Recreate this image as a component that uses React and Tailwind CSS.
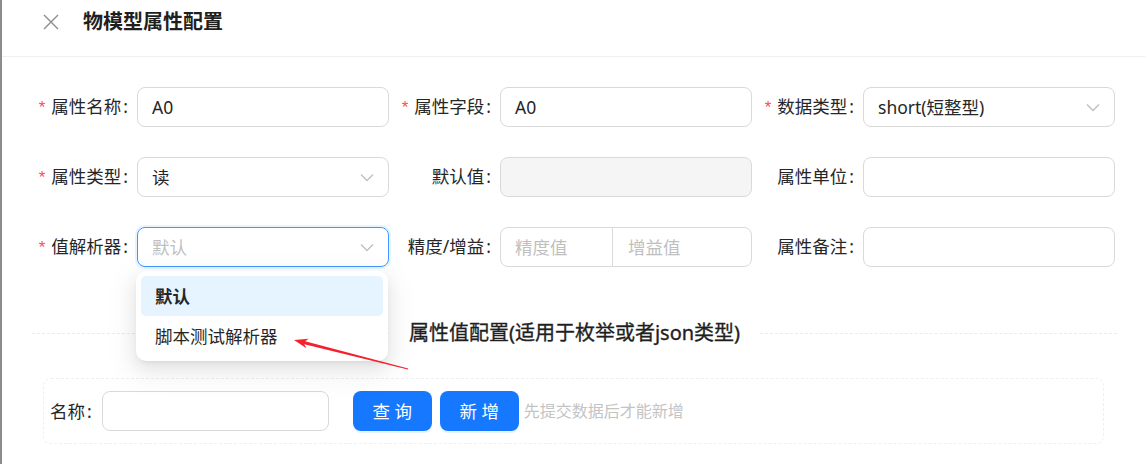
import { useState } from 'react';

const FONT = "font-['Noto_Sans','Noto_Sans_CJK_SC',sans-serif]";

function Chevron() {
  return (
    <svg width="14" height="9" viewBox="0 0 14 9" className="shrink-0">
      <polyline points="1,1.5 7,7.5 13,1.5" fill="none" stroke="#bfbfbf" strokeWidth="1.3" />
    </svg>
  );
}

function Field({ label, required, children }) {
  return (
    <div className="flex w-[363px] items-center">
      <label className="flex w-[111px] shrink-0 items-center justify-end pr-[9px] text-[17.5px] leading-none text-[#262626]">
        {required && <span className="mr-[6px] text-[17px] text-[#ff4d4f] font-['Liberation_Sans',sans-serif]">*</span>}
        {label}
        <span className="ml-[2px]">:</span>
      </label>
      <div className="w-[252px]">{children}</div>
    </div>
  );
}

function TextBox({ value, placeholder, disabled }) {
  return (
    <div
      className={
        'flex h-[40px] items-center rounded-[8px] border px-[14px] text-[17.5px] ' +
        (disabled ? 'border-[#d9d9d9] bg-[#f5f5f5]' : 'border-[#d9d9d9] bg-white')
      }
    >
      {value ? <span className="text-[#262626]">{value}</span> : <span className="text-[#bfbfbf]">{placeholder}</span>}
    </div>
  );
}

function SelectBox({ value, placeholder, focused }) {
  return (
    <div
      className={
        'flex h-[40px] items-center justify-between rounded-[8px] border pl-[14px] pr-[14px] text-[17.5px] ' +
        (focused ? 'border-[#4096ff] shadow-[0_0_0_2px_rgba(5,145,255,0.1)]' : 'border-[#d9d9d9]')
      }
    >
      {value ? <span className="text-[#262626]">{value}</span> : <span className="text-[#bfbfbf]">{placeholder}</span>}
      <Chevron />
    </div>
  );
}

export default function App() {
  const [parser] = useState('默认');
  const options = ['默认', '脚本测试解析器'];

  return (
    <div className={`relative flex h-[464px] w-[1145px] overflow-hidden bg-white ${FONT}`}>
      <div className="w-[2px] shrink-0 bg-[#8c8c8c]" />
      <div className="flex flex-1 flex-col">
        <div className="flex h-[57px] items-start border-b border-[#f0f0f0] pl-[41px] pt-[8px]">
          <div className="flex h-[28px] items-center">
            <svg width="16" height="16" viewBox="0 0 16 16">
              <path d="M1 1L15 15M15 1L1 15" stroke="#8c8c8c" strokeWidth="1.4" />
            </svg>
          </div>
          <h1 className="ml-[24px] text-[20px] font-bold leading-[28px] text-[#1f1f1f]">物模型属性配置</h1>
        </div>

        <div className="flex flex-col gap-[30px] pl-[24px] pt-[30px]">
          <div className="flex">
            <Field label="属性名称" required><TextBox value="A0" /></Field>
            <Field label="属性字段" required><TextBox value="A0" /></Field>
            <Field label="数据类型" required><SelectBox value="short(短整型)" /></Field>
          </div>
          <div className="flex">
            <Field label="属性类型" required><SelectBox value="读" /></Field>
            <Field label="默认值"><TextBox disabled /></Field>
            <Field label="属性单位"><TextBox /></Field>
          </div>
          <div className="flex">
            <Field label="值解析器" required><SelectBox placeholder="默认" focused /></Field>
            <Field label="精度/增益">
              <div className="flex h-[40px] items-center rounded-[8px] border border-[#d9d9d9] text-[17.5px] text-[#bfbfbf]">
                <div className="flex h-full w-[112px] items-center border-r border-[#d9d9d9] pl-[14px]">精度值</div>
                <div className="flex h-full flex-1 items-center pl-[15px]">增益值</div>
              </div>
            </Field>
            <Field label="属性备注"><TextBox /></Field>
          </div>
        </div>

        <div className="ml-[30px] mr-[28px] mt-[51px] flex h-[30px] items-center">
          <div className="flex-1 border-t border-dashed border-[#ebebeb]" />
          <span className="px-[20px] text-[20px] font-normal leading-none text-[#1f1f1f] [-webkit-text-stroke:0.35px_#1f1f1f]">属性值配置(适用于枚举或者json类型)</span>
          <div className="flex-1 border-t border-dashed border-[#ebebeb]" />
        </div>

        <div className="ml-[41px] mr-[41px] mt-[30px] flex h-[66px] items-center rounded-[8px] border border-dashed border-[#efefef] pl-[6px]">
          <span className="mr-[10px] text-[17.5px] text-[#262626]">名称<span className="ml-[2px]">:</span></span>
          <div className="h-[40px] w-[227px] rounded-[8px] border border-[#d9d9d9]" />
          <button className="ml-[24px] h-[40px] w-[79px] rounded-[8px] bg-[#1677ff] text-[17.5px] text-white shadow-[0_2px_0_rgba(5,145,255,0.1)]">查 询</button>
          <button className="ml-[8px] h-[40px] w-[79px] rounded-[8px] bg-[#1677ff] text-[17.5px] text-white shadow-[0_2px_0_rgba(5,145,255,0.1)]">新 增</button>
          <span className="ml-[5px] text-[16px] text-[#c4c4c4]">先提交数据后才能新增</span>
        </div>
      </div>

      <div className="absolute left-[136px] top-[271px] w-[252px] rounded-[10px] bg-white p-[5px] shadow-[0_6px_16px_0_rgba(0,0,0,0.08),0_3px_6px_-4px_rgba(0,0,0,0.12),0_9px_28px_8px_rgba(0,0,0,0.05)]">
        {options.map((o) => (
          <div
            key={o}
            className={
              'flex h-[40px] items-center rounded-[5px] px-[14px] text-[17.5px] text-[#262626] ' +
              (o === parser ? 'bg-[#e6f4ff] font-bold' : '')
            }
          >
            {o}
          </div>
        ))}
      </div>

      <svg className="pointer-events-none absolute left-0 top-0" width="1145" height="464">
        <polygon
          points="294,340 308.8,338.7 305.1,341.2 408.1,368.6 407.9,369.4 304.3,344.2 306.4,348.3"
          fill="#f5222d"
        />
      </svg>
    </div>
  );
}
